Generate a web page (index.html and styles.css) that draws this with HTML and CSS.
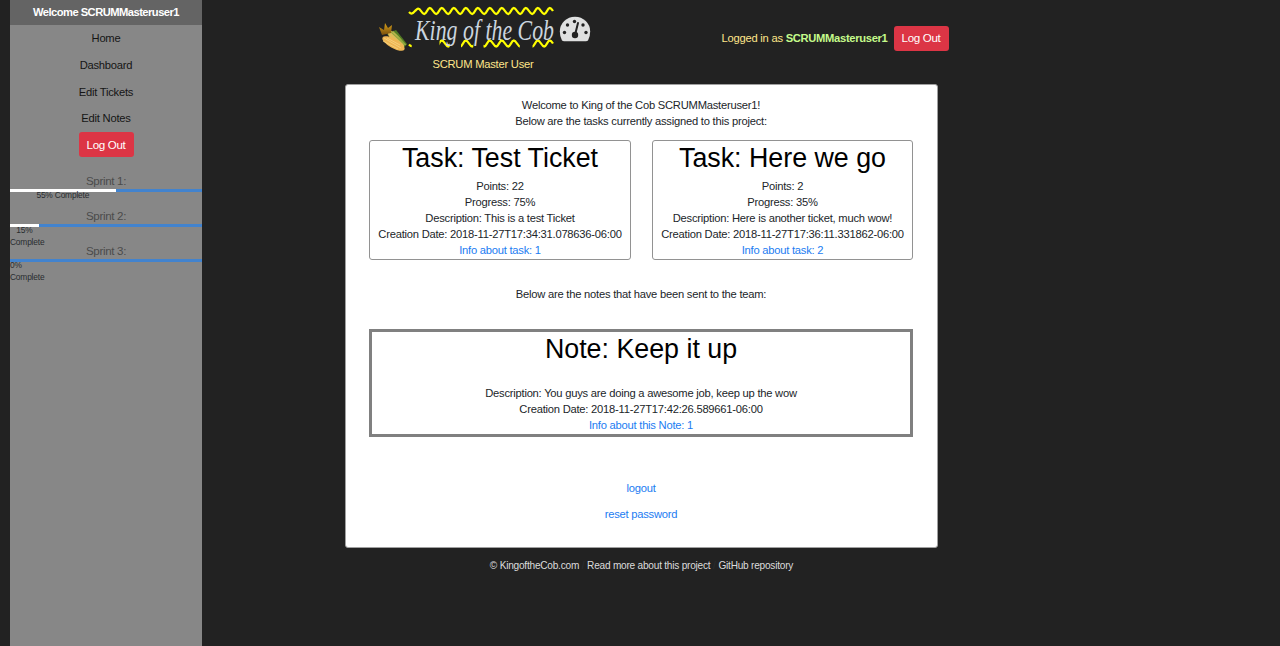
FILE: index.html
```html
<!DOCTYPE html>
<html lang="en">
<head>
<meta charset="utf-8">
<title>King of the Cob</title>
<link rel="stylesheet" href="styles.css">
</head>
<body>
<div class="page">
  <aside class="sidebar">
    <div class="side-title">Welcome SCRUMMasteruser1</div>
    <nav class="side-nav">
      <a>Home</a><a>Dashboard</a><a>Edit Tickets</a><a>Edit Notes</a>
    </nav>
    <button class="btn">Log Out</button>
    <div class="sprints">
      <section class="sprint"><h4>Sprint 1:</h4><div class="track"><div class="bar" style="width:55%"><span>55% Complete</span></div></div></section>
      <section class="sprint"><h4>Sprint 2:</h4><div class="track"><div class="bar" style="width:15%"><span>15% Complete</span></div></div></section>
      <section class="sprint"><h4>Sprint 3:</h4><div class="track"><div class="bar" style="width:0%"><span>0% Complete</span></div></div></section>
    </div>
  </aside>
  <main class="main">
    <header class="header">
      <div class="brand">
        <svg class="logo" width="220" height="56" viewBox="375 0 220 56">
          <defs>
            <path id="wave" d="M409 12c3 3 4 1 6-1s3.500-4 6 0 4 4 6 0 3.500-4 6 0 4 4 6 0 3.500-4 6 0 4 4 6 0 3.500-4 6 0 4 4 6 0 3.500-4 6 0 4 4 6 0 3.500-4 6 0 4 4 6 0 3.500-4 6 0 4 4 6 0 3.500-4 6 0 4 4 6 0 3.500-4 6 0 4 4 6 0 3.500-4 6 0 4 4 6 0 3.500-4 6 0 4 4 6 0 3.500-4 6 0"/>
            <clipPath id="gaps"><path d="M408 36h3.700v14H408zM439.500 36h10.200v14h-10.200zM461 36h12.300v14H461zM483.500 36h36.300v14h-36.300zM532.500 36h22v14h-22z"/></clipPath>
            <linearGradient id="gold" x2="0" y2="1"><stop stop-color="#d9a018"/><stop offset="1" stop-color="#79500e"/></linearGradient>
          </defs>
          <use class="wave" href="#wave"/>
          <g clip-path="url(#gaps)"><use class="wave" href="#wave" y="32.500"/></g>
          <text class="script" x="415" y="39.500" textLength="139" lengthAdjust="spacingAndGlyphs">King of the Cob</text>
          <path fill="#517b24" d="M387 34l9-4 11 14-4 5z"/>
          <ellipse cx="396" cy="39.500" rx="11.500" ry="4" transform="rotate(48 396 39.500)" fill="#dfbd58"/>
          <path d="M390 31l15 14M393 31l13 14" stroke="#8fa83e" stroke-width="1.100"/>
          <ellipse cx="393.500" cy="43.500" rx="12.500" ry="4.600" transform="rotate(29 393.500 43.500)" fill="#eeb654"/>
          <path d="M384 38l17 10M383 41l15 8M387 38l13 7" fill="none" stroke="#f7d583" stroke-width=".8"/>
          <path fill="url(#gold)" d="M382 35l-3-8 5 3 1-7 3 5 4-3-1 8z"/>
          <path fill="#dfe0e0" d="M562 40.500q-2.200-4-2.200-9a15.200 14.700 0 0 1 30.400 0q0 5-2.200 9-1 .700-2 .700h-22q-1 0-2-.700z"/>
          <g fill="#222"><circle cx="564.500" cy="32.500" r="1.700"/><circle cx="567.500" cy="25" r="1.700"/><circle cx="574.500" cy="21.500" r="1.700"/><circle cx="583" cy="25" r="1.700"/><circle cx="586" cy="32.500" r="1.700"/><circle cx="575" cy="35" r="3.200"/></g>
          <path d="M575 35l3-12" stroke="#222" stroke-width="2" stroke-linecap="round"/>
        </svg>
        <div class="role">SCRUM Master User</div>
      </div>
      <div class="account"><span class="logged">Logged in as <b>SCRUMMasteruser1</b></span><span class="stop">.</span><button class="btn">Log Out</button></div>
    </header>
    <div class="panel">
      <p class="intro">Welcome to King of the Cob SCRUMMasteruser1!<br>Below are the tasks currently assigned to this project:</p>
      <div class="tasks">
        <article class="task"><h1>Task: Test Ticket</h1><p>Points: 22</p><p>Progress: 75%</p><p>Description: This is a test Ticket</p><p>Creation Date: 2018-11-27T17:34:31.078636-06:00</p><a>Info about task: 1</a></article>
        <article class="task"><h1>Task: Here we go</h1><p>Points: 2</p><p>Progress: 35%</p><p>Description: Here is another ticket, much wow!</p><p>Creation Date: 2018-11-27T17:36:11.331862-06:00</p><a>Info about task: 2</a></article>
      </div>
      <p class="notes-intro">Below are the notes that have been sent to the team:</p>
      <article class="note"><h1>Note: Keep it up</h1><p>Description: You guys are doing a awesome job, keep up the wow</p><p>Creation Date: 2018-11-27T17:42:26.589661-06:00</p><a>Info about this Note: 1</a></article>
      <div class="links"><a>logout</a><a>reset password</a></div>
    </div>
    <footer class="footer"><a>© KingoftheCob.com</a><i>/</i><a>Read more about this project</a><i>/</i><a>GitHub repository</a></footer>
  </main>
</div>
</body>
</html>
```
FILE: styles.css
```css
* { box-sizing: border-box; }
body { margin: 0; background: #222; color: #212529; font: 11.200px/16.080px "Liberation Sans", Arial, sans-serif; letter-spacing: -.230px; text-align: center; overflow: hidden; }
h1, h4, p { margin: 0; font-weight: 400; }
.page { display: flex; height: 646px; padding-left: 10px; }
.sidebar { width: 192px; background: #878787; flex: none; }
.side-title { height: 25px; padding-top: 4px; background: #646464; color: #fff; font-weight: 700; letter-spacing: -.540px; }
.side-nav { display: flex; flex-direction: column; gap: 10.700px; padding-top: 5px; color: #151515; margin-bottom: 6px; }
.btn { display: inline-block; width: 55px; height: 25px; border: 0; border-radius: 3px; background: #dc3545; color: #fff; font: inherit; font-size: 11.600px; letter-spacing: -.350px; padding: 0; }
.sprints { margin-top: 12px; }
.sprint { height: 34.900px; padding-top: 4px; }
.sprint h4 { color: #4b4b4b; font-size: 11.600px; line-height: 16px; letter-spacing: -.350px; }
.track { height: 3px; background: #4283ce; }
.bar { height: 3px; background: #fff; }
.bar span { display: block; color: #292d30; font-size: 8.400px; line-height: 12px; letter-spacing: -.180px; }
.main { width: 604px; margin-left: 143px; flex: none; }
.header { height: 84px; display: flex; justify-content: space-between; }
.brand { width: 220px; margin-left: 30px; }
.logo { display: block; overflow: visible; }
.wave { fill: none; stroke: #ff0; stroke-width: 2.300; }
.script { font: italic 29px "Liberation Serif", cursive; fill: #cbd5df; letter-spacing: 0; }
.role { color: #ffe68a; width: 216px; }
.account { display: flex; height: 25px; margin: 26px .5px 0 0; align-items: center; color: #ffe68a; }
.account b { color: #c5fb8b; letter-spacing: -.320px; }
.stop { color: #343a40; width: 6px; text-align: left; }
.panel { width: 593px; height: 464px; background: #fff; border: 1px solid #a0a0a0; border-radius: 3px; padding: 12px 24px 0 23px; }
.intro { height: 43px; }
.tasks { display: flex; justify-content: space-between; }
.task { width: 262px; height: 120px; border: 1px solid #929292; border-radius: 3px; }
.task:last-child { width: 261px; }
h1 { color: #000; font-size: 26.800px; line-height: 32px; padding-top: 1px; letter-spacing: 0; }
.task h1 { margin-bottom: 4px; }
a { text-decoration: none; }
.panel a { color: #1b7cf2; display: block; }
.notes-intro { margin-top: 26px; margin-bottom: 27px; }
.note { height: 108px; border: 3px solid #808080; }
.note h1 { margin-bottom: 20px; }
.links { display: flex; flex-direction: column; gap: 10.700px; margin-top: 42.500px; }
.footer { width: 593px; display: flex; justify-content: center; padding-top: 10px; color: #dcdcdc; font-size: 10.100px; letter-spacing: -.225px; }
.footer i { width: 8px; color: #2b2d30; font-style: normal; }
```
